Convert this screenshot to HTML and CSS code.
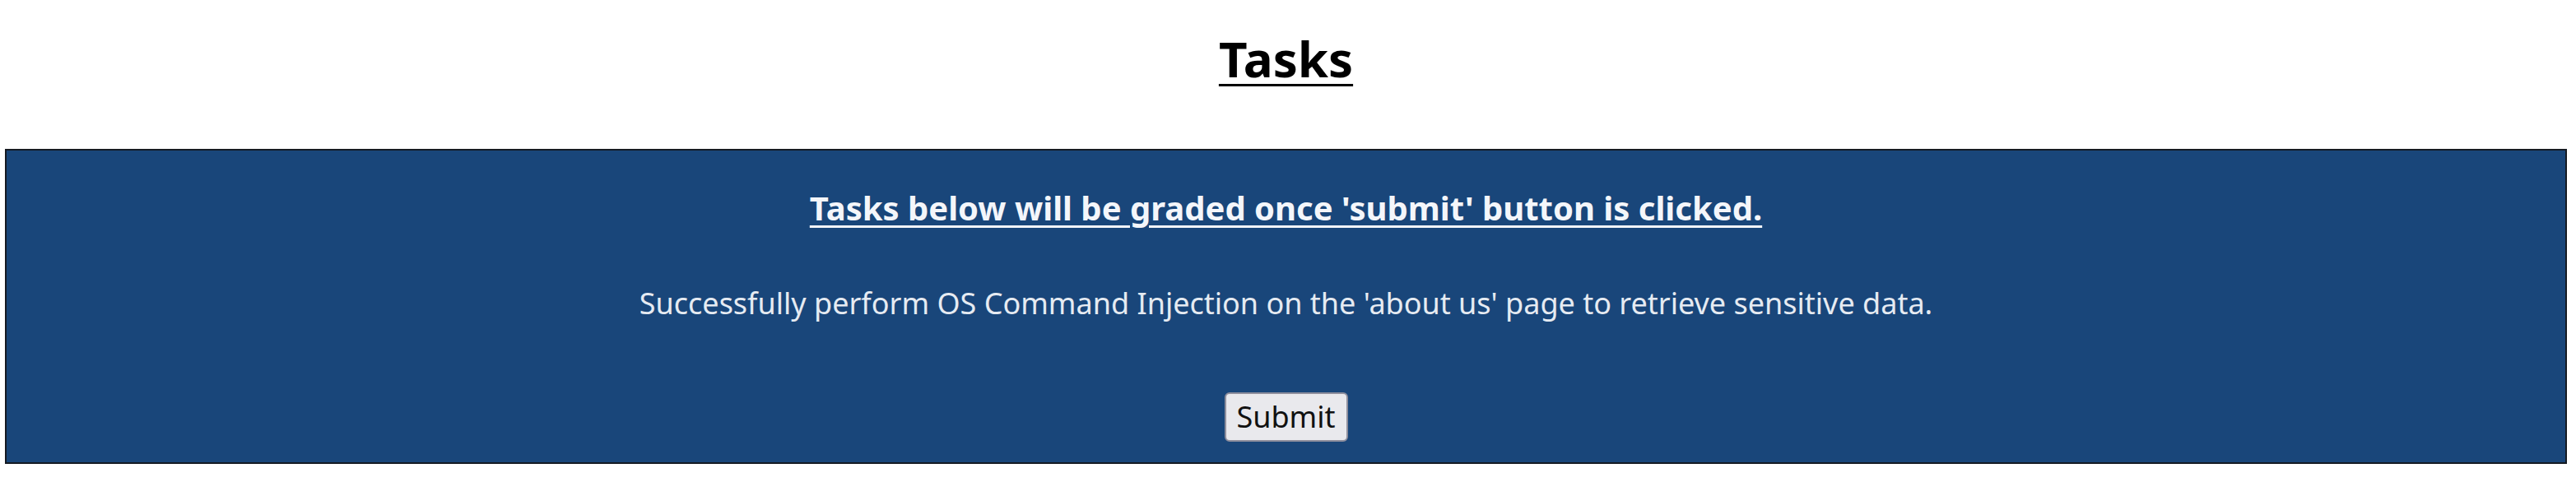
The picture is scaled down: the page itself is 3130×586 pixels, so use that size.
FILE: index.html
```html
<!DOCTYPE html>
<html>
<head>
<meta charset="utf-8">
<title>Tasks</title>
<link rel="stylesheet" href="styles.css">
</head>
<body>
<div class="page">
  <h1 class="title">Tasks</h1>
  <section class="task-box">
    <h3 class="task-note">Tasks below will be graded once 'submit' button is clicked.</h3>
    <p class="task-text">Successfully perform OS Command Injection on the 'about us' page to retrieve sensitive data.</p>
    <button class="submit-btn" type="button">Submit</button>
  </section>
</div>
</body>
</html>
```
FILE: styles.css
```css
html, body {
  margin: 0;
  padding: 0;
  background: #ffffff;
}
.page {
  font-family: "Noto Sans", "Open Sans", sans-serif;
  padding: 30px 11px 0 6px;
  display: flex;
  flex-direction: column;
}
.title {
  margin: 0;
  font-size: 60px;
  line-height: 82px;
  font-weight: 700;
  text-align: center;
  text-decoration: underline;
  text-decoration-thickness: 3px;
  text-underline-offset: 8px;
  color: #000;
}
.task-box {
  margin-top: 69px;
  background: #19467a;
  border: 2px solid #151a22;
  display: flex;
  flex-direction: column;
  align-items: center;
  padding: 43px 0 25px;
}
.task-note {
  margin: 0;
  font-size: 40px;
  line-height: 54px;
  font-weight: 700;
  color: #f4f6fa;
  text-decoration: underline;
  text-decoration-thickness: 3px;
  text-underline-offset: 6px;
}
.task-text {
  margin: 64px 0 0;
  font-size: 36px;
  line-height: 49px;
  color: #e6ebf2;
}
.submit-btn {
  margin-top: 84px;
  width: 150px;
  height: 60px;
  font-family: "Noto Sans", "Open Sans", sans-serif;
  font-size: 36px;
  line-height: 1;
  color: #111;
  background: #e9e9ed;
  border: 2px solid #8f8f9d;
  border-radius: 6px;
  padding: 0;
}
```
